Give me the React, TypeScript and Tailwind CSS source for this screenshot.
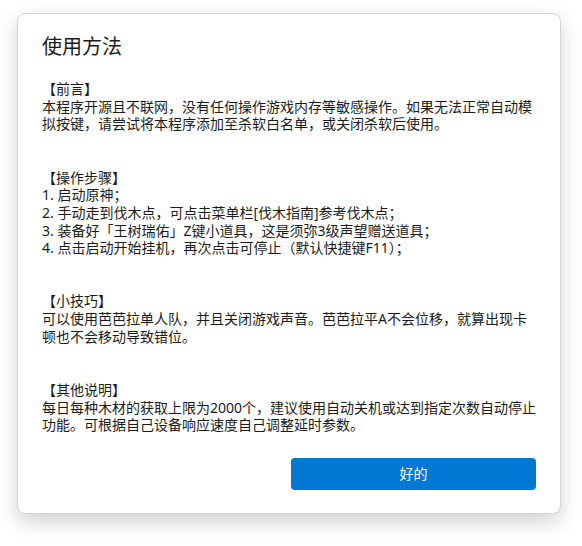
const sections = [
  {
    title: "【前言】",
    lines: [
      "本程序开源且不联网，没有任何操作游戏内存等敏感操作。如果无法正常自动模",
      "拟按键，请尝试将本程序添加至杀软白名单，或关闭杀软后使用。",
    ],
  },
  {
    title: "【操作步骤】",
    lines: [
      "1. 启动原神；",
      "2. 手动走到伐木点，可点击菜单栏[伐木指南]参考伐木点；",
      "3. 装备好「王树瑞佑」Z键小道具，这是须弥3级声望赠送道具；",
      "4. 点击启动开始挂机，再次点击可停止（默认快捷键F11）；",
    ],
  },
  {
    title: "【小技巧】",
    lines: [
      "可以使用芭芭拉单人队，并且关闭游戏声音。芭芭拉平A不会位移，就算出现卡",
      "顿也不会移动导致错位。",
    ],
  },
  {
    title: "【其他说明】",
    lines: [
      "每日每种木材的获取上限为2000个，建议使用自动关机或达到指定次数自动停止",
      "功能。可根据自己设备响应速度自己调整延时参数。",
    ],
  },
];

export default function App() {
  return (
    <div className="w-[582px] h-[546px] bg-white pt-[13px] pl-[17px] font-['Noto_Sans','Noto_Sans_CJK_SC',sans-serif] text-[#1b1b1b]">
      {/* Dialog */}
      <div className="w-[544px] h-[501px] bg-white rounded-lg border border-[#d4d4d4] shadow-[0_8px_20px_rgba(0,0,0,0.18)] flex flex-col px-[24px] pt-[20px] pb-[23px]">
        <h1 className="text-[20px] leading-[26px] font-normal">使用方法</h1>

        <div className="mt-[20px] text-[14px] leading-[17.7px] whitespace-nowrap">
          {sections.map((s, i) => (
            <div key={s.title} className={i > 0 ? "mt-[35.4px]" : ""}>
              <div>{s.title}</div>
              {s.lines.map((l) => (
                <div key={l}>{l}</div>
              ))}
            </div>
          ))}
        </div>

        {/* Footer buttons */}
        <div className="mt-auto grid grid-cols-2 gap-[4px]">
          <div />
          <button className="h-[32px] rounded-[4px] bg-[#0078d4] text-white text-[14px] leading-none">
            好的
          </button>
        </div>
      </div>
    </div>
  );
}
